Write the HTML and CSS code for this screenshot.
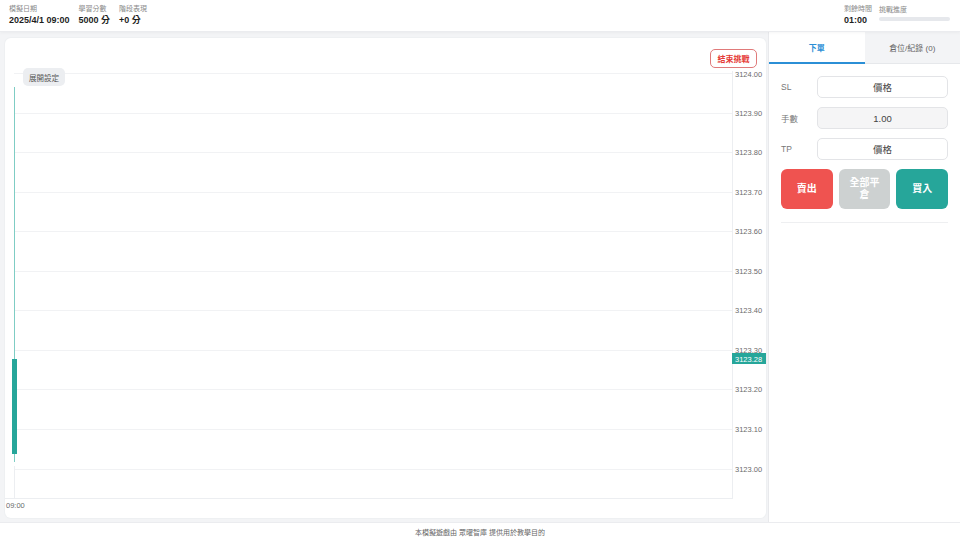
FILE: index.html
```html
<!DOCTYPE html>
<html lang="zh-Hant">
<head>
<meta charset="utf-8">
<link rel="stylesheet" href="styles.css">
</head>
<body>
<header class="topbar">
  <div class="stats">
    <div class="stat"><div class="stat-label">模擬日期</div><div class="stat-value">2025/4/1 09:00</div></div>
    <div class="stat"><div class="stat-label">學習分數</div><div class="stat-value">5000 分</div></div>
    <div class="stat"><div class="stat-label">階段表現</div><div class="stat-value">+0 分</div></div>
  </div>
  <div class="stats right">
    <div class="stat"><div class="stat-label">剩餘時間</div><div class="stat-value">01:00</div></div>
    <div class="progress-wrap"><div class="stat-label">挑戰進度</div><div class="progress"><div class="progress-fill" style="width:0%"></div></div></div>
  </div>
</header>
<main class="main">
  <section class="chart-area">
    <div class="chart-card">
      <button class="btn-settings">展開設定</button>
      <button class="btn-end">結束挑戰</button>
      <svg class="chart" width="761" height="447" viewBox="0 0 761 447">
        <g stroke="#f1f2f4" stroke-width="1">
          <line x1="9" x2="727" y1="2.5" y2="2.5"/>
          <line x1="9" x2="727" y1="42.5" y2="42.5"/>
          <line x1="9" x2="727" y1="81.5" y2="81.5"/>
          <line x1="9" x2="727" y1="121.5" y2="121.5"/>
          <line x1="9" x2="727" y1="160.5" y2="160.5"/>
          <line x1="9" x2="727" y1="200.5" y2="200.5"/>
          <line x1="9" x2="727" y1="239.5" y2="239.5"/>
          <line x1="9" x2="727" y1="279.5" y2="279.5"/>
          <line x1="9" x2="727" y1="318.5" y2="318.5"/>
          <line x1="9" x2="727" y1="358.5" y2="358.5"/>
          <line x1="9" x2="727" y1="398.5" y2="398.5"/>
        </g>
        <g stroke="#eceef1" stroke-width="1">
          <line x1="727.5" x2="727.5" y1="0" y2="427"/>
          <line x1="0" x2="728" y1="427.5" y2="427.5"/>
          <line x1="9.5" x2="9.5" y1="395" y2="427"/>
        </g>
        <g class="axis" font-size="7.5" fill="#6b6b6b">
          <text x="730" y="5.5">3124.00</text>
          <text x="730" y="45">3123.90</text>
          <text x="730" y="84">3123.80</text>
          <text x="730" y="124">3123.70</text>
          <text x="730" y="163">3123.60</text>
          <text x="730" y="203">3123.50</text>
          <text x="730" y="242">3123.40</text>
          <text x="730" y="282">3123.30</text>
          <text x="730" y="321">3123.20</text>
          <text x="730" y="361">3123.10</text>
          <text x="730" y="401">3123.00</text>
          <text x="1" y="437">09:00</text>
        </g>
        <line x1="9.5" x2="9.5" y1="16" y2="391" stroke="#7fcdc4" stroke-width="1"/>
        <rect x="7" y="288" width="5" height="95" fill="#26a69a"/>
        <rect x="727" y="282" width="36" height="11" fill="#26a69a"/>
        <text x="730" y="290.5" font-size="7.5" fill="#ffffff">3123.28</text>
      </svg>
    </div>
  </section>
  <aside class="panel">
    <div class="tabs">
      <div class="tab active">下單</div>
      <div class="tab">倉位/紀錄 (0)</div>
    </div>
    <div class="form">
      <div class="row"><span class="row-label">SL</span><div class="input">價格</div></div>
      <div class="row"><span class="row-label">手數</span><div class="input filled">1.00</div></div>
      <div class="row"><span class="row-label">TP</span><div class="input">價格</div></div>
      <div class="actions">
        <button class="act sell">賣出</button>
        <button class="act close">全部平倉</button>
        <button class="act buy">買入</button>
      </div>
      <div class="sep"></div>
    </div>
  </aside>
</main>
<footer class="footer">本模擬遊戲由 眾曜智庫 提供用於教學目的</footer>
</body>
</html>
```
FILE: styles.css
```css
* { box-sizing: border-box; }
html, body { margin: 0; padding: 0; }
body {
  width: 960px;
  height: 540px;
  overflow: hidden;
  font-family: "Liberation Sans", "Noto Sans CJK TC", sans-serif;
  color: #222;
  background: #fff;
  display: flex;
  flex-direction: column;
}
button { font-family: inherit; cursor: pointer; }

.topbar {
  height: 32px;
  flex: none;
  display: flex;
  justify-content: space-between;
  align-items: center;
  padding: 0 10px 0 9px;
  background: #fff;
  border-bottom: 1px solid #ebecef;
  box-shadow: 0 1px 3px rgba(0,0,0,0.04);
  position: relative;
  z-index: 1;
}
.stats { display: flex; gap: 9px; align-items: center; }
.stats.right { gap: 7px; }
.stat { display: flex; flex-direction: column; gap: 2px; }
.stat-label { font-size: 7px; color: #8a8a8a; line-height: 8px; }
.stat-value { font-size: 9px; font-weight: bold; color: #1f1f1f; line-height: 11px; }
.progress-wrap { display: flex; flex-direction: column; gap: 3px; margin-top: -4px; }
.progress { width: 71px; height: 4px; background: #e6e8ec; border-radius: 2px; overflow: hidden; }
.progress-fill { height: 100%; background: #26a69a; }

.main {
  flex: 1;
  display: flex;
  background: #f3f4f6;
  min-height: 0;
}
.chart-area {
  flex: 1;
  padding: 6px 2px 4px 5px;
  display: flex;
}
.chart-card {
  flex: 1;
  position: relative;
  background: #fff;
  border-radius: 6px;
  padding-top: 33px;
  overflow: hidden;
  box-shadow: 0 0 0 1px #eef0f2;
}
.chart { display: block; font-family: "Liberation Sans", sans-serif; }
.btn-settings {
  position: absolute;
  left: 18px;
  top: 30px;
  width: 42px;
  height: 18px;
  padding: 0;
  border: none;
  border-radius: 5px;
  background: #eceef1;
  color: #555;
  font-size: 7.5px;
  z-index: 2;
}
.btn-end {
  position: absolute;
  left: 705px;
  top: 11px;
  width: 47px;
  height: 19px;
  padding: 0;
  border: 1px solid #e07a7a;
  border-radius: 5px;
  background: #fff;
  color: #e53935;
  font-size: 8px;
  font-weight: bold;
  z-index: 2;
}

.panel {
  width: 192px;
  flex: none;
  background: #fff;
  border-left: 1px solid #e8e9ec;
  display: flex;
  flex-direction: column;
}
.tabs { display: flex; height: 32px; border-bottom: 1px solid #e6e8eb; }
.tab {
  flex: 1;
  display: flex;
  align-items: center;
  justify-content: center;
  font-size: 8px;
  color: #666;
  background: #f3f4f6;
}
.tab.active {
  background: #fff;
  color: #2b8fd6;
  font-weight: bold;
  border-bottom: 2px solid #2b8fd6;
  margin-bottom: -1px;
}
.form { padding: 12px 12px 0 12px; display: flex; flex-direction: column; gap: 9px; }
.row { display: flex; align-items: center; }
.row-label { width: 36px; font-size: 8.5px; color: #777; }
.input {
  flex: 1;
  height: 22px;
  border: 1px solid #e3e4e7;
  border-radius: 5px;
  display: flex;
  align-items: center;
  justify-content: center;
  font-size: 9.5px;
  color: #444;
  background: #fff;
}
.input.filled { background: #f5f5f6; }
.actions { display: flex; gap: 6px; }
.act {
  flex: 1;
  height: 40px;
  border: none;
  border-radius: 6px;
  color: #fff;
  font-size: 10px;
  font-weight: bold;
  padding: 0 8px;
  line-height: 12px;
}
.sell { background: #ef5350; }
.close { background: #cdd1d1; }
.buy { background: #26a69a; }
.sep { height: 1px; background: #eeeff1; margin-top: 4px; }

.footer {
  height: 18px;
  flex: none;
  display: flex;
  align-items: center;
  justify-content: center;
  font-size: 7px;
  color: #666;
  background: #fff;
  border-top: 1px solid #ebecef;
}
```
